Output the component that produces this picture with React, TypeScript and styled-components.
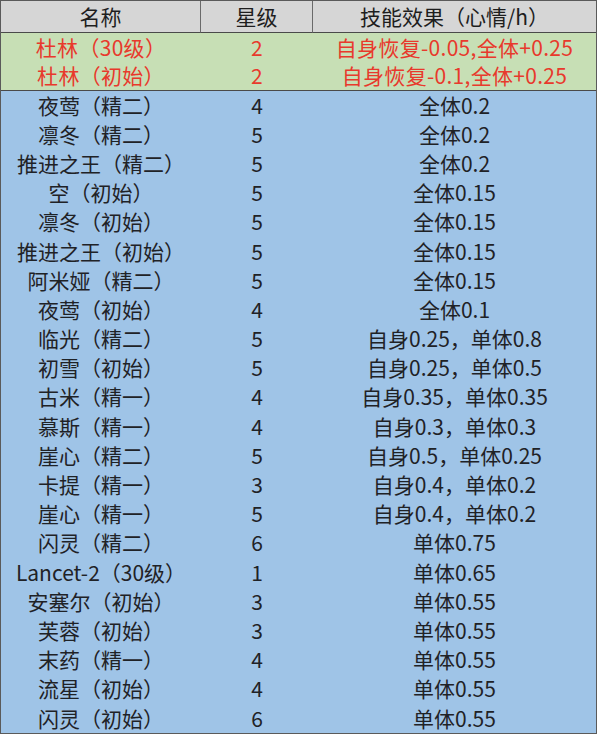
import React from "react";
import styled, { createGlobalStyle } from "styled-components";

type Tone = "green" | "blue";

interface Operator {
  name: string;
  stars: number;
  effect: string;
  tone: Tone;
}

const rows: Operator[] = [
  { name: "杜林（30级）", stars: 2, effect: "自身恢复-0.05,全体+0.25", tone: "green" },
  { name: "杜林（初始）", stars: 2, effect: "自身恢复-0.1,全体+0.25", tone: "green" },
  { name: "夜莺（精二）", stars: 4, effect: "全体0.2", tone: "blue" },
  { name: "凛冬（精二）", stars: 5, effect: "全体0.2", tone: "blue" },
  { name: "推进之王（精二）", stars: 5, effect: "全体0.2", tone: "blue" },
  { name: "空（初始）", stars: 5, effect: "全体0.15", tone: "blue" },
  { name: "凛冬（初始）", stars: 5, effect: "全体0.15", tone: "blue" },
  { name: "推进之王（初始）", stars: 5, effect: "全体0.15", tone: "blue" },
  { name: "阿米娅（精二）", stars: 5, effect: "全体0.15", tone: "blue" },
  { name: "夜莺（初始）", stars: 4, effect: "全体0.1", tone: "blue" },
  { name: "临光（精二）", stars: 5, effect: "自身0.25，单体0.8", tone: "blue" },
  { name: "初雪（初始）", stars: 5, effect: "自身0.25，单体0.5", tone: "blue" },
  { name: "古米（精一）", stars: 4, effect: "自身0.35，单体0.35", tone: "blue" },
  { name: "慕斯（精一）", stars: 4, effect: "自身0.3，单体0.3", tone: "blue" },
  { name: "崖心（精二）", stars: 5, effect: "自身0.5，单体0.25", tone: "blue" },
  { name: "卡提（精一）", stars: 3, effect: "自身0.4，单体0.2", tone: "blue" },
  { name: "崖心（精一）", stars: 5, effect: "自身0.4，单体0.2", tone: "blue" },
  { name: "闪灵（精二）", stars: 6, effect: "单体0.75", tone: "blue" },
  { name: "Lancet-2（30级）", stars: 1, effect: "单体0.65", tone: "blue" },
  { name: "安塞尔（初始）", stars: 3, effect: "单体0.55", tone: "blue" },
  { name: "芙蓉（初始）", stars: 3, effect: "单体0.55", tone: "blue" },
  { name: "末药（精一）", stars: 4, effect: "单体0.55", tone: "blue" },
  { name: "流星（初始）", stars: 4, effect: "单体0.55", tone: "blue" },
  { name: "闪灵（初始）", stars: 6, effect: "单体0.55", tone: "blue" },
];

const GlobalStyles = createGlobalStyle`
  body {
    margin: 0;
    background: #ffffff;
    font-family: "Noto Sans CJK SC", "Noto Sans", sans-serif;
  }
`;

const Table = styled.div`
  width: 597px;
  display: grid;
  grid-template-columns: 200px 112px 1fr;
  border: 1px solid #5a5a5a;
  box-sizing: border-box;
`;

const HeadCell = styled.div<{ $last?: boolean }>`
  height: 31px;
  display: flex;
  align-items: center;
  justify-content: center;
  background: #d6d6d6;
  color: #1e1e1e;
  font-size: 21px;
  line-height: 1;
  border-right: ${(p) => (p.$last ? "none" : "1px solid #6a6a6a")};
  border-bottom: 1px solid #4a4a4a;
`;

const Cell = styled.div<{ $tone: Tone; $edge?: boolean }>`
  height: ${(p) => (p.$tone === "green" ? "28.75px" : "29.2px")};
  display: flex;
  align-items: center;
  justify-content: center;
  font-size: 21px;
  line-height: 1;
  white-space: nowrap;
  background: ${(p) => (p.$tone === "green" ? "#c7dfb5" : "#9fc4e7")};
  color: ${(p) => (p.$tone === "green" ? "#e8392c" : "#1f2226")};
  letter-spacing: ${(p) => (p.$tone === "green" ? "0.3px" : "0")};
  border-bottom: ${(p) => (p.$edge ? "1px solid #4a4a4a" : "none")};
  box-sizing: border-box;
`;

export default function App() {
  return (
    <>
      <GlobalStyles />
      <Table>
        <HeadCell>名称</HeadCell>
        <HeadCell>星级</HeadCell>
        <HeadCell $last>技能效果（心情/h）</HeadCell>
        {rows.map((r, i) => {
          const edge = r.tone === "green" && rows[i + 1]?.tone === "blue";
          return (
            <React.Fragment key={i}>
              <Cell $tone={r.tone} $edge={edge}>{r.name}</Cell>
              <Cell $tone={r.tone} $edge={edge}>{r.stars}</Cell>
              <Cell $tone={r.tone} $edge={edge}>{r.effect}</Cell>
            </React.Fragment>
          );
        })}
      </Table>
    </>
  );
}
